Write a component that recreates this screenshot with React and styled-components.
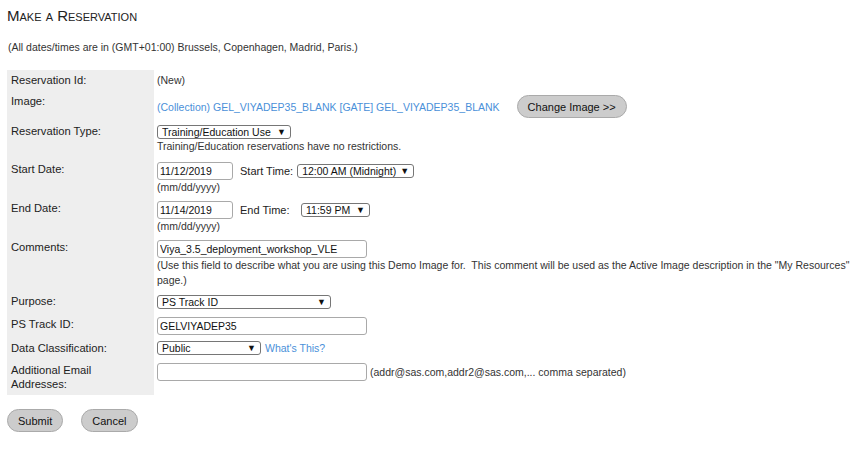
import React from 'react'
import styled, {createGlobalStyle} from 'styled-components'

const GlobalStyle = createGlobalStyle`
    body {
        margin: 0;
        background: #fff;
        font-family: "Liberation Sans", Arial, sans-serif;
        font-size: 10.5px;
        color: #333;
    }
`

const Dropdown = ({width, children}) => (
    <SelectWrap $width={width}>
        <Select defaultValue={children}>
            <option>{children}</option>
        </Select>
        <Arrow>▼</Arrow>
    </SelectWrap>
)

// one table row: label cell + value cell, top padding tuned per row
const Row = ({label, pt = 4, lpt = 4, children}) => (
    <>
        <Label $pt={lpt}>{label}</Label>
        <Value $pt={pt}>{children}</Value>
    </>
)

const commentHelp =
    '(Use this field to describe what you are using this Demo Image for.\u00a0 This comment will be used as the Active Image description in the "My Resources" page.)'

const App = () => {
    return (
        <Page>
            <GlobalStyle />
            <Title>Make a Reservation</Title>
            <Note>(All dates/times are in (GMT+01:00) Brussels, Copenhagen, Madrid, Paris.)</Note>
            <form onSubmit={(e) => e.preventDefault()}>
                <FormTable>
                    <Row label="Reservation Id:" pt={3} lpt={3}>(New)</Row>

                    <Row label="Image:" pt={4} lpt={3}>
                        <InlineRow>
                            <Link href="#">(Collection) GEL_VIYADEP35_BLANK [GATE] GEL_VIYADEP35_BLANK</Link>
                            <PillButton type="button" $wide>Change Image &gt;&gt;</PillButton>
                        </InlineRow>
                    </Row>

                    <Row label="Reservation Type:" pt={4} lpt={3}>
                        <Dropdown width={134}>Training/Education Use</Dropdown>
                        <Hint>Training/Education reservations have no restrictions.</Hint>
                    </Row>

                    <Row label="Start Date:" pt={6} lpt={6}>
                        <InlineRow>
                            <TextInput defaultValue="11/12/2019" $width={76} />
                            <TimeLabel $width={53}>Start Time:</TimeLabel>
                            <Dropdown width={117}>12:00 AM (Midnight)</Dropdown>
                        </InlineRow>
                        <Hint>(mm/dd/yyyy)</Hint>
                    </Row>

                    <Row label="End Date:" pt={4} lpt={4}>
                        <InlineRow>
                            <TextInput defaultValue="11/14/2019" $width={76} />
                            <TimeLabel $width={57}>End Time:</TimeLabel>
                            <Dropdown width={69}>11:59 PM</Dropdown>
                        </InlineRow>
                        <Hint>(mm/dd/yyyy)</Hint>
                    </Row>

                    <Row label="Comments:" pt={4} lpt={4}>
                        <TextInput defaultValue="Viya_3.5_deployment_workshop_VLE" $width={210} />
                        <Hint $lh={15}>{commentHelp}</Hint>
                    </Row>

                    <Row label="Purpose:" pt={4} lpt={3}>
                        <Dropdown width={174}>PS Track ID</Dropdown>
                    </Row>

                    <Row label="PS Track ID:" pt={5} lpt={5}>
                        <TextInput defaultValue="GELVIYADEP35" $width={210} />
                    </Row>

                    <Row label="Data Classification:" pt={3} lpt={3}>
                        <InlineRow>
                            <Dropdown width={104}>Public</Dropdown>
                            <Link href="#">What's This?</Link>
                        </InlineRow>
                    </Row>

                    <Row label="Additional Email Addresses:" pt={4} lpt={4}>
                        <InlineRow $gap={3}>
                            <TextInput defaultValue="" $width={210} />
                            <span>(addr@sas.com,addr2@sas.com,... comma separated)</span>
                        </InlineRow>
                    </Row>
                </FormTable>
                <Actions>
                    <PillButton type="submit">Submit</PillButton>
                    <PillButton type="button">Cancel</PillButton>
                </Actions>
            </form>
        </Page>
    )
}

export default App

const Page = styled.div`
    padding: 7px 8px 0 7px;
`
const Title = styled.h1`
    margin: 0;
    font-size: 15px;
    font-weight: normal;
    font-variant: small-caps;
    color: #222;
    line-height: 18px;
`
const Note = styled.p`
    margin: 15px 0 16px 1px;
    line-height: 14px;
`
const FormTable = styled.div`
    display: grid;
    grid-template-columns: 147px 1fr;
`
const Label = styled.div`
    background: #eee;
    padding: ${(p) => p.$pt}px 8px 4px 4px;
    font-size: 11.2px;
    line-height: 14px;
    color: #222;
`
const Value = styled.div`
    padding: ${(p) => p.$pt}px 0 3px 3px;
    line-height: 14px;
`
const InlineRow = styled.div`
    display: flex;
    align-items: center;
    gap: ${(p) => p.$gap || 4}px;
    white-space: nowrap;
`
const Link = styled.a`
    color: #4a90d9;
    text-decoration: none;
`
const Hint = styled.div`
    line-height: ${(p) => p.$lh || 14}px;
`
const TimeLabel = styled.span`
    flex: 0 0 ${(p) => p.$width}px;
    font-size: 11px;
    line-height: 14px;
    color: #222;
    margin-left: 3px;
`
const TextInput = styled.input`
    box-sizing: border-box;
    flex: 0 0 auto;
    width: ${(p) => p.$width}px;
    height: 18px;
    padding: 0 2px;
    border: 1px solid #a9a9a9;
    border-radius: 3px;
    font-family: "Liberation Sans", Arial, sans-serif;
    font-size: 10.5px;
    color: #111;
    outline: none;
`
const SelectWrap = styled.span`
    position: relative;
    display: inline-block;
    flex: 0 0 auto;
    width: ${(p) => p.$width}px;
    height: 14px;
    vertical-align: top;
`
const Select = styled.select`
    appearance: none;
    box-sizing: border-box;
    display: block;
    width: 100%;
    height: 14px;
    padding: 0 12px 0 4px;
    border: 1px solid #767676;
    border-radius: 3px;
    background: #fff;
    font-family: "Liberation Sans", Arial, sans-serif;
    font-size: 10.5px;
    line-height: 12px;
    color: #111;
    outline: none;
`
const Arrow = styled.span`
    position: absolute;
    right: 5px;
    top: 1px;
    font-size: 9px;
    line-height: 12px;
    color: #111;
    pointer-events: none;
`
const PillButton = styled.button`
    box-sizing: border-box;
    flex: 0 0 auto;
    height: 23px;
    padding: 0 10px;
    margin-left: ${(p) => (p.$wide ? 13 : 0)}px;
    background: #ccc;
    border: 1px solid #aaa;
    border-radius: 12px;
    font-family: "Liberation Sans", Arial, sans-serif;
    font-size: 11px;
    color: #111;
    cursor: pointer;
`
const Actions = styled.div`
    display: flex;
    gap: 18px;
    margin-top: 14px;
`
